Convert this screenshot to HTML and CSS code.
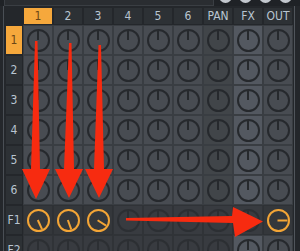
FILE: index.html
```html
<!DOCTYPE html>
<html>
<head>
	<title>Mixer</title>
	<link rel="stylesheet" href="styles.css">
</head>
<body>
	<div class="topbar">
		<div class="topbar-field"></div>
		<div class="topbar-dots">
			<span></span><span></span><span></span><span></span>
		</div>
	</div>

	<div class="mixer">
		<div class="corner"></div>
		<div class="head active">1</div>
		<div class="head">2</div>
		<div class="head">3</div>
		<div class="head">4</div>
		<div class="head">5</div>
		<div class="head">6</div>
		<div class="head">PAN</div>
		<div class="head">FX</div>
		<div class="head">OUT</div>

		<div class="row-head active">1</div>
		<div class="cell"><div class="knob"></div></div>
		<div class="cell"><div class="knob"></div></div>
		<div class="cell"><div class="knob"></div></div>
		<div class="cell"><div class="knob"></div></div>
		<div class="cell"><div class="knob"></div></div>
		<div class="cell"><div class="knob"></div></div>
		<div class="cell"><div class="knob"></div></div>
		<div class="cell"><div class="knob"></div></div>
		<div class="cell"><div class="knob"></div></div>

		<div class="row-head">2</div>
		<div class="cell"><div class="knob"></div></div>
		<div class="cell"><div class="knob"></div></div>
		<div class="cell"><div class="knob"></div></div>
		<div class="cell"><div class="knob"></div></div>
		<div class="cell"><div class="knob"></div></div>
		<div class="cell"><div class="knob"></div></div>
		<div class="cell"><div class="knob"></div></div>
		<div class="cell"><div class="knob"></div></div>
		<div class="cell"><div class="knob"></div></div>

		<div class="row-head">3</div>
		<div class="cell"><div class="knob"></div></div>
		<div class="cell"><div class="knob"></div></div>
		<div class="cell"><div class="knob"></div></div>
		<div class="cell"><div class="knob"></div></div>
		<div class="cell"><div class="knob"></div></div>
		<div class="cell"><div class="knob"></div></div>
		<div class="cell"><div class="knob"></div></div>
		<div class="cell"><div class="knob"></div></div>
		<div class="cell"><div class="knob"></div></div>

		<div class="row-head">4</div>
		<div class="cell"><div class="knob"></div></div>
		<div class="cell"><div class="knob"></div></div>
		<div class="cell"><div class="knob"></div></div>
		<div class="cell"><div class="knob"></div></div>
		<div class="cell"><div class="knob"></div></div>
		<div class="cell"><div class="knob"></div></div>
		<div class="cell"><div class="knob"></div></div>
		<div class="cell"><div class="knob"></div></div>
		<div class="cell"><div class="knob"></div></div>

		<div class="row-head">5</div>
		<div class="cell"><div class="knob"></div></div>
		<div class="cell"><div class="knob"></div></div>
		<div class="cell"><div class="knob"></div></div>
		<div class="cell"><div class="knob"></div></div>
		<div class="cell"><div class="knob"></div></div>
		<div class="cell"><div class="knob"></div></div>
		<div class="cell"><div class="knob"></div></div>
		<div class="cell"><div class="knob"></div></div>
		<div class="cell"><div class="knob"></div></div>

		<div class="row-head">6</div>
		<div class="cell"><div class="knob"></div></div>
		<div class="cell"><div class="knob"></div></div>
		<div class="cell"><div class="knob"></div></div>
		<div class="cell"><div class="knob"></div></div>
		<div class="cell"><div class="knob"></div></div>
		<div class="cell"><div class="knob"></div></div>
		<div class="cell"><div class="knob"></div></div>
		<div class="cell"><div class="knob"></div></div>
		<div class="cell"><div class="knob"></div></div>

		<div class="row-head">F1</div>
		<div class="cell set"><div class="knob on" style="--a:155deg"></div></div>
		<div class="cell set"><div class="knob on" style="--a:160deg"></div></div>
		<div class="cell set"><div class="knob on" style="--a:122deg"></div></div>
		<div class="cell dim"><div class="knob"></div></div>
		<div class="cell dim"><div class="knob"></div></div>
		<div class="cell dim"><div class="knob"></div></div>
		<div class="cell dim"><div class="knob"></div></div>
		<div class="cell dim"><div class="knob"></div></div>
		<div class="cell set"><div class="knob on" style="--a:90deg"></div></div>

		<div class="row-head">F2</div>
		<div class="cell dim"><div class="knob"></div></div>
		<div class="cell dim"><div class="knob"></div></div>
		<div class="cell dim"><div class="knob"></div></div>
		<div class="cell dim"><div class="knob"></div></div>
		<div class="cell dim"><div class="knob"></div></div>
		<div class="cell dim"><div class="knob"></div></div>
		<div class="cell dim"><div class="knob"></div></div>
		<div class="cell"><div class="knob"></div></div>
		<div class="cell"><div class="knob"></div></div>
	</div>

	<!-- annotation arrows drawn over the grid -->
	<svg class="arrows" width="300" height="251" viewBox="0 0 300 251">
		<polygon points="35,41 37.5,41 40,169 50,169 36,199 22,169 31,169" />
		<polygon points="69,43 71.5,43 74,169 83,169 69,198 55,169 64,169" />
		<polygon points="98.5,45 101,45 104,169 113,169 99,198 85,169 94,169" />
		<polygon points="126,218 126,220.5 233,223 235,237 263,221.5 233,207 232,216" />
	</svg>
</body>
</html>
```

FILE: styles.css
```css
body {
	margin: 0;
	background-color: #24272b;
	font-family: "DejaVu Sans Condensed", "DejaVu Sans", sans-serif;
	overflow: hidden;
	width: 300px;
	height: 251px;
	position: relative;
}

.topbar {
	display: flex;
	height: 6px;
	background-color: #1f2226;
	overflow: hidden;
}

.topbar-field {
	width: 208px;
	margin-left: 4px;
	border: 1px solid #3a3e43;
	border-top: none;
	background-color: #2a2d31;
}

.topbar-dots {
	display: flex;
	gap: 7px;
	margin-left: 5px;
}

.topbar-dots span {
	width: 13px;
	height: 13px;
	margin-top: -10px;
	border-radius: 50%;
	background-color: #c3c8ce;
}

.mixer {
	display: grid;
	grid-template-columns: 16px repeat(9, 28px);
	grid-template-rows: 16px repeat(8, 28px);
	gap: 2px;
	padding: 2px 0 0 2px;
	margin-left: 3px;
	border-left: 1px solid #4a4f55;
	width: 288px;
	border-right: 1px solid #50555b;
}

.corner {
	background-color: #24272b;
}

.head,
.row-head {
	display: flex;
	align-items: center;
	justify-content: center;
	background-color: #2d3135;
	color: #b9c5d1;
	font-size: 12px;
}

.head.active,
.row-head.active {
	background-color: #f6a83c;
	color: #6a4617;
}

.cell {
	display: flex;
	align-items: center;
	justify-content: center;
	background-color: #484c52;
	border: 1px solid #393d42;
	margin: -1px;
}

.cell:nth-child(10n+8) {
	background-color: #414549;
}

.cell:nth-child(10n+9) {
	background-color: #535860;
}

.cell.dim {
	background-color: #383b40;
	border-color: #303337;
}

.cell.set {
	background-color: #34373b;
	border-color: #2e3135;
}

.knob {
	position: relative;
	width: 19px;
	height: 19px;
	border: 2px solid #26292d;
	border-radius: 50%;
	--a: 0deg;
}

.knob::after {
	content: '';
	position: absolute;
	left: 50%;
	top: 0;
	width: 2px;
	height: 50%;
	margin-left: -1px;
	background-color: #26292d;
	transform-origin: 50% 100%;
	transform: rotate(var(--a));
}

.cell.dim .knob {
	border-color: #2c2f33;
}

.cell.dim .knob::after {
	background-color: #2c2f33;
}

.knob.on {
	border-color: #f3a536;
}

.knob.on::after {
	background-color: #f3a536;
}

.arrows {
	position: absolute;
	top: 0;
	left: 0;
	pointer-events: none;
}

.arrows polygon {
	fill: #f72b10;
}
```
